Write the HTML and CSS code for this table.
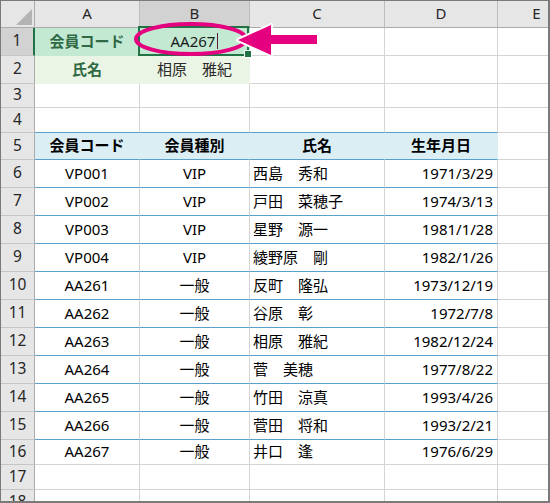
FILE: index.html
```html
<!DOCTYPE html>
<html lang="ja">
<head>
<meta charset="utf-8">
<title>会員リスト</title>
<link rel="stylesheet" href="styles.css">
</head>
<body>
<div class="sheet">
  <div class="grid">
    <div class="corner"><svg width="33" height="26" viewBox="0 0 33 26"><polygon points="31,8 31,24 15,24" fill="#b4b4b4"/></svg></div>
    <div class="ch">A</div>
    <div class="ch sel">B</div>
    <div class="ch">C</div>
    <div class="ch">D</div>
    <div class="ch">E</div>

    <div class="rh sel">1</div>
    <div class="mint gb">会員コード</div>
    <div class="mint active"><span class="edit">AA267</span><span class="caret"></span></div>
    <div></div><div></div><div></div>

    <div class="rh">2</div>
    <div class="lg gb">氏名</div>
    <div class="lg">相原　雅紀</div>
    <div></div><div></div><div></div>

    <div class="rh">3</div>
    <div></div><div></div><div></div><div></div><div></div>

    <div class="rh">4</div>
    <div class="bb"></div><div class="bb"></div><div class="bb"></div><div class="bb"></div><div></div>

    <div class="rh">5</div>
    <div class="th">会員コード</div>
    <div class="th">会員種別</div>
    <div class="th">氏名</div>
    <div class="th">生年月日</div>
    <div></div>

    <div class="rh">6</div>
    <div class="bb">VP001</div><div class="bb">VIP</div><div class="bb l">西島　秀和</div><div class="bb r">1971/3/29</div><div></div>
    <div class="rh">7</div>
    <div class="bb">VP002</div><div class="bb">VIP</div><div class="bb l">戸田　菜穂子</div><div class="bb r">1974/3/13</div><div></div>
    <div class="rh">8</div>
    <div class="bb">VP003</div><div class="bb">VIP</div><div class="bb l">星野　源一</div><div class="bb r">1981/1/28</div><div></div>
    <div class="rh">9</div>
    <div class="bb">VP004</div><div class="bb">VIP</div><div class="bb l">綾野原　剛</div><div class="bb r">1982/1/26</div><div></div>
    <div class="rh">10</div>
    <div class="bb">AA261</div><div class="bb">一般</div><div class="bb l">反町　隆弘</div><div class="bb r">1973/12/19</div><div></div>
    <div class="rh">11</div>
    <div class="bb">AA262</div><div class="bb">一般</div><div class="bb l">谷原　彰</div><div class="bb r">1972/7/8</div><div></div>
    <div class="rh">12</div>
    <div class="bb">AA263</div><div class="bb">一般</div><div class="bb l">相原　雅紀</div><div class="bb r">1982/12/24</div><div></div>
    <div class="rh">13</div>
    <div class="bb">AA264</div><div class="bb">一般</div><div class="bb l">菅　美穂</div><div class="bb r">1977/8/22</div><div></div>
    <div class="rh">14</div>
    <div class="bb">AA265</div><div class="bb">一般</div><div class="bb l">竹田　涼真</div><div class="bb r">1993/4/26</div><div></div>
    <div class="rh">15</div>
    <div class="bb">AA266</div><div class="bb">一般</div><div class="bb l">菅田　将和</div><div class="bb r">1993/2/21</div><div></div>
    <div class="rh">16</div>
    <div>AA267</div><div>一般</div><div class="l">井口　逢</div><div class="r">1976/6/29</div><div></div>

    <div class="rh">17</div>
    <div></div><div></div><div></div><div></div><div></div>
    <div class="rh">18</div>
    <div></div><div></div><div></div><div></div><div></div>
  </div>
  <svg class="overlay" width="550" height="503" viewBox="0 0 550 503">
    <ellipse cx="191" cy="39" rx="55" ry="15" fill="none" stroke="#e4007f" stroke-width="4"/>
    <polygon points="238,40 271,25 271,55" fill="#e4007f" stroke="#fff" stroke-width="4" stroke-linejoin="round" paint-order="stroke"/>
    <rect x="266" y="35" width="51" height="9" fill="#e4007f"/>
  </svg>
</div>
</body>
</html>
```

FILE: styles.css
```css
* { box-sizing: border-box; }
html, body { margin: 0; background: #fff; }

.sheet {
  position: relative;
  width: 550px;
  height: 503px;
  border: solid #7a7a7a;
  border-width: 1px 2px 2px 1px;
  overflow: hidden;
  font-family: "Noto Sans", "Noto Sans CJK JP", sans-serif;
}

.grid {
  display: grid;
  grid-template-columns: 34px 105px 110px 135px 113px 78px;
  grid-template-rows: 27px 28px 28px 24px 25px 27px repeat(10, 28px) 25px 25px 25px;
}

.grid > div {
  display: flex;
  align-items: center;
  justify-content: center;
  border-right: 1px solid #d4d4d4;
  border-bottom: 1px solid #d4d4d4;
  font-size: 15px;
  line-height: 1;
  color: #000;
  white-space: nowrap;
  padding-bottom: 1px;
}

.grid > .corner {
  background: #e6e6e6;
  border-right-color: #ababab;
  border-bottom-color: #ababab;
  padding: 0;
  align-items: flex-start;
  justify-content: flex-start;
}

.grid > .ch {
  background: #e6e6e6;
  border-right-color: #bdbdbd;
  border-bottom-color: #ababab;
  font-size: 15px;
  color: #262626;
}
.grid > .ch.sel {
  background: #d2d2d2;
  border-bottom: 2px solid #217346;
}

.grid > .rh {
  background: #e6e6e6;
  border-right-color: #ababab;
  border-bottom-color: #c6c6c6;
  font-size: 15.5px;
  color: #262626;
}
.grid > .rh.sel {
  background: #d2d2d2;
  border-right: 2px solid #217346;
}

.grid > .mint {
  background: #c3e9d3;
  border-color: #c3e9d3;
}
.grid > .lg {
  background: #ebf5e5;
  border-color: #ebf5e5;
  color: #2b2b2b;
}
.grid > .gb {
  font-weight: 700;
  color: #2f6a44;
}

.active { position: relative; }
.active::before {
  content: "";
  position: absolute;
  left: -2px;
  top: -2px;
  right: 0;
  bottom: -1px;
  border: 2px solid #217346;
}
.active::after {
  content: "";
  position: absolute;
  right: -3px;
  bottom: -3px;
  width: 6px;
  height: 6px;
  background: #217346;
  border: 1px solid #fff;
}
.edit { color: #1a1a1a; }
.caret {
  display: inline-block;
  width: 1px;
  height: 16px;
  margin-left: 2px;
  background: #5a1d34;
}

.grid > .bb { border-bottom-color: #5aa0cc; }

.grid > .th {
  background: #daeef3;
  border-right-color: #daeef3;
  border-bottom-color: #5aa0cc;
  font-weight: 700;
}

.grid > .l { justify-content: flex-start; padding-left: 3px; }
.grid > .r { justify-content: flex-end; padding-right: 4px; }

.overlay {
  position: absolute;
  left: -1px;
  top: -1px;
  pointer-events: none;
}
```
